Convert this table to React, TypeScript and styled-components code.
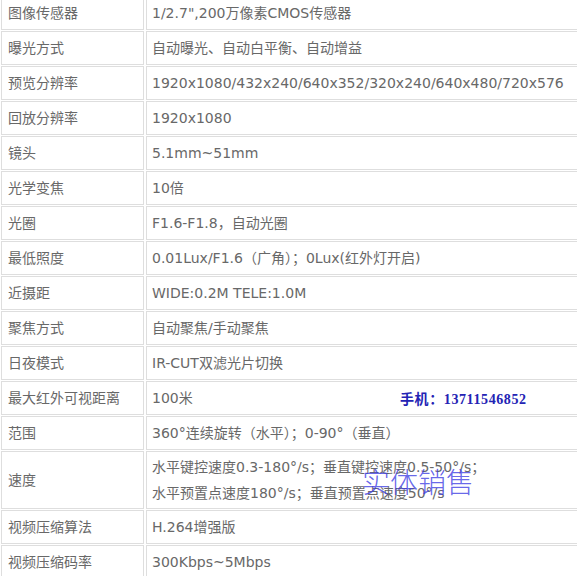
import * as React from "react";
import styled, { createGlobalStyle } from "styled-components";

const GlobalStyle = createGlobalStyle`
  html, body {
    margin: 0;
    padding: 0;
    background: #ffffff;
    overflow: hidden;
  }
`;

interface Spec {
    nom: string;
    valeur: string[];
}

const SPECS: Spec[] = [
    { nom: "图像传感器", valeur: ["1/2.7\",200万像素CMOS传感器"] },
    { nom: "曝光方式", valeur: ["自动曝光、自动白平衡、自动增益"] },
    { nom: "预览分辨率", valeur: ["1920x1080/432x240/640x352/320x240/640x480/720x576"] },
    { nom: "回放分辨率", valeur: ["1920x1080"] },
    { nom: "镜头", valeur: ["5.1mm~51mm"] },
    { nom: "光学变焦", valeur: ["10倍"] },
    { nom: "光圈", valeur: ["F1.6-F1.8，自动光圈"] },
    { nom: "最低照度", valeur: ["0.01Lux/F1.6（广角）；0Lux(红外灯开启)"] },
    { nom: "近摄距", valeur: ["WIDE:0.2M TELE:1.0M"] },
    { nom: "聚焦方式", valeur: ["自动聚焦/手动聚焦"] },
    { nom: "日夜模式", valeur: ["IR-CUT双滤光片切换"] },
    { nom: "最大红外可视距离", valeur: ["100米"] },
    { nom: "范围", valeur: ["360°连续旋转（水平）；0-90°（垂直）"] },
    {
        nom: "速度",
        valeur: [
            "水平键控速度0.3-180°/s；垂直键控速度0.5-50°/s；",
            "水平预置点速度180°/s；垂直预置点速度50°/s",
        ],
    },
    { nom: "视频压缩算法", valeur: ["H.264增强版"] },
    { nom: "视频压缩码率", valeur: ["300Kbps~5Mbps"] },
];

const Page = styled.div`
    position: relative;
    width: 577px;
    height: 576px;
    overflow: hidden;
`;

const Tableau = styled.table`
    border-collapse: separate;
    border-spacing: 2px 1px;
    margin: -5px 0 0 -1px;
    width: 660px;
    table-layout: fixed;
    font-family: "DejaVu Sans", "Noto Sans CJK SC", sans-serif;
    font-size: 14px;
    color: #686868;
`;

const Cellule = styled.td<{ $large?: boolean; $haut?: boolean }>`
    border: 1px solid #dedede;
    padding: ${(p) => (p.$haut ? "2px 5px" : "3px 5px")};
    padding-left: ${(p) => (p.$large ? "5px" : "6px")};
    line-height: 26px;
    white-space: nowrap;
    overflow: hidden;
    vertical-align: middle;
    width: ${(p) => (p.$large ? "auto" : "130px")};
`;

const Ligne = styled.div`
    height: 26px;
`;

const Telephone = styled.div`
    position: absolute;
    left: 400px;
    top: 391px;
    font-family: "Liberation Serif", "Noto Sans CJK SC", serif;
    font-weight: bold;
    font-size: 14px;
    line-height: 18px;
    color: #2323b4;
    letter-spacing: 0.6px;
`;

const Filigrane = styled.div`
    position: absolute;
    left: 362px;
    top: 461px;
    font-family: "Noto Sans CJK SC", sans-serif;
    font-weight: 300;
    font-size: 28px;
    line-height: 40px;
    color: rgba(64, 64, 228, 0.8);
`;

export default function App() {
    return (
        <Page>
            <GlobalStyle />
            <Tableau>
                <tbody>
                    {SPECS.map((s) => (
                        <tr key={s.nom}>
                            <Cellule>{s.nom}</Cellule>
                            <Cellule $large $haut={s.valeur.length > 1}>
                                {s.valeur.map((v) => (
                                    <Ligne key={v}>{v}</Ligne>
                                ))}
                            </Cellule>
                        </tr>
                    ))}
                </tbody>
            </Tableau>
            <Telephone>手机：13711546852</Telephone>
            <Filigrane>实体销售</Filigrane>
        </Page>
    );
}
